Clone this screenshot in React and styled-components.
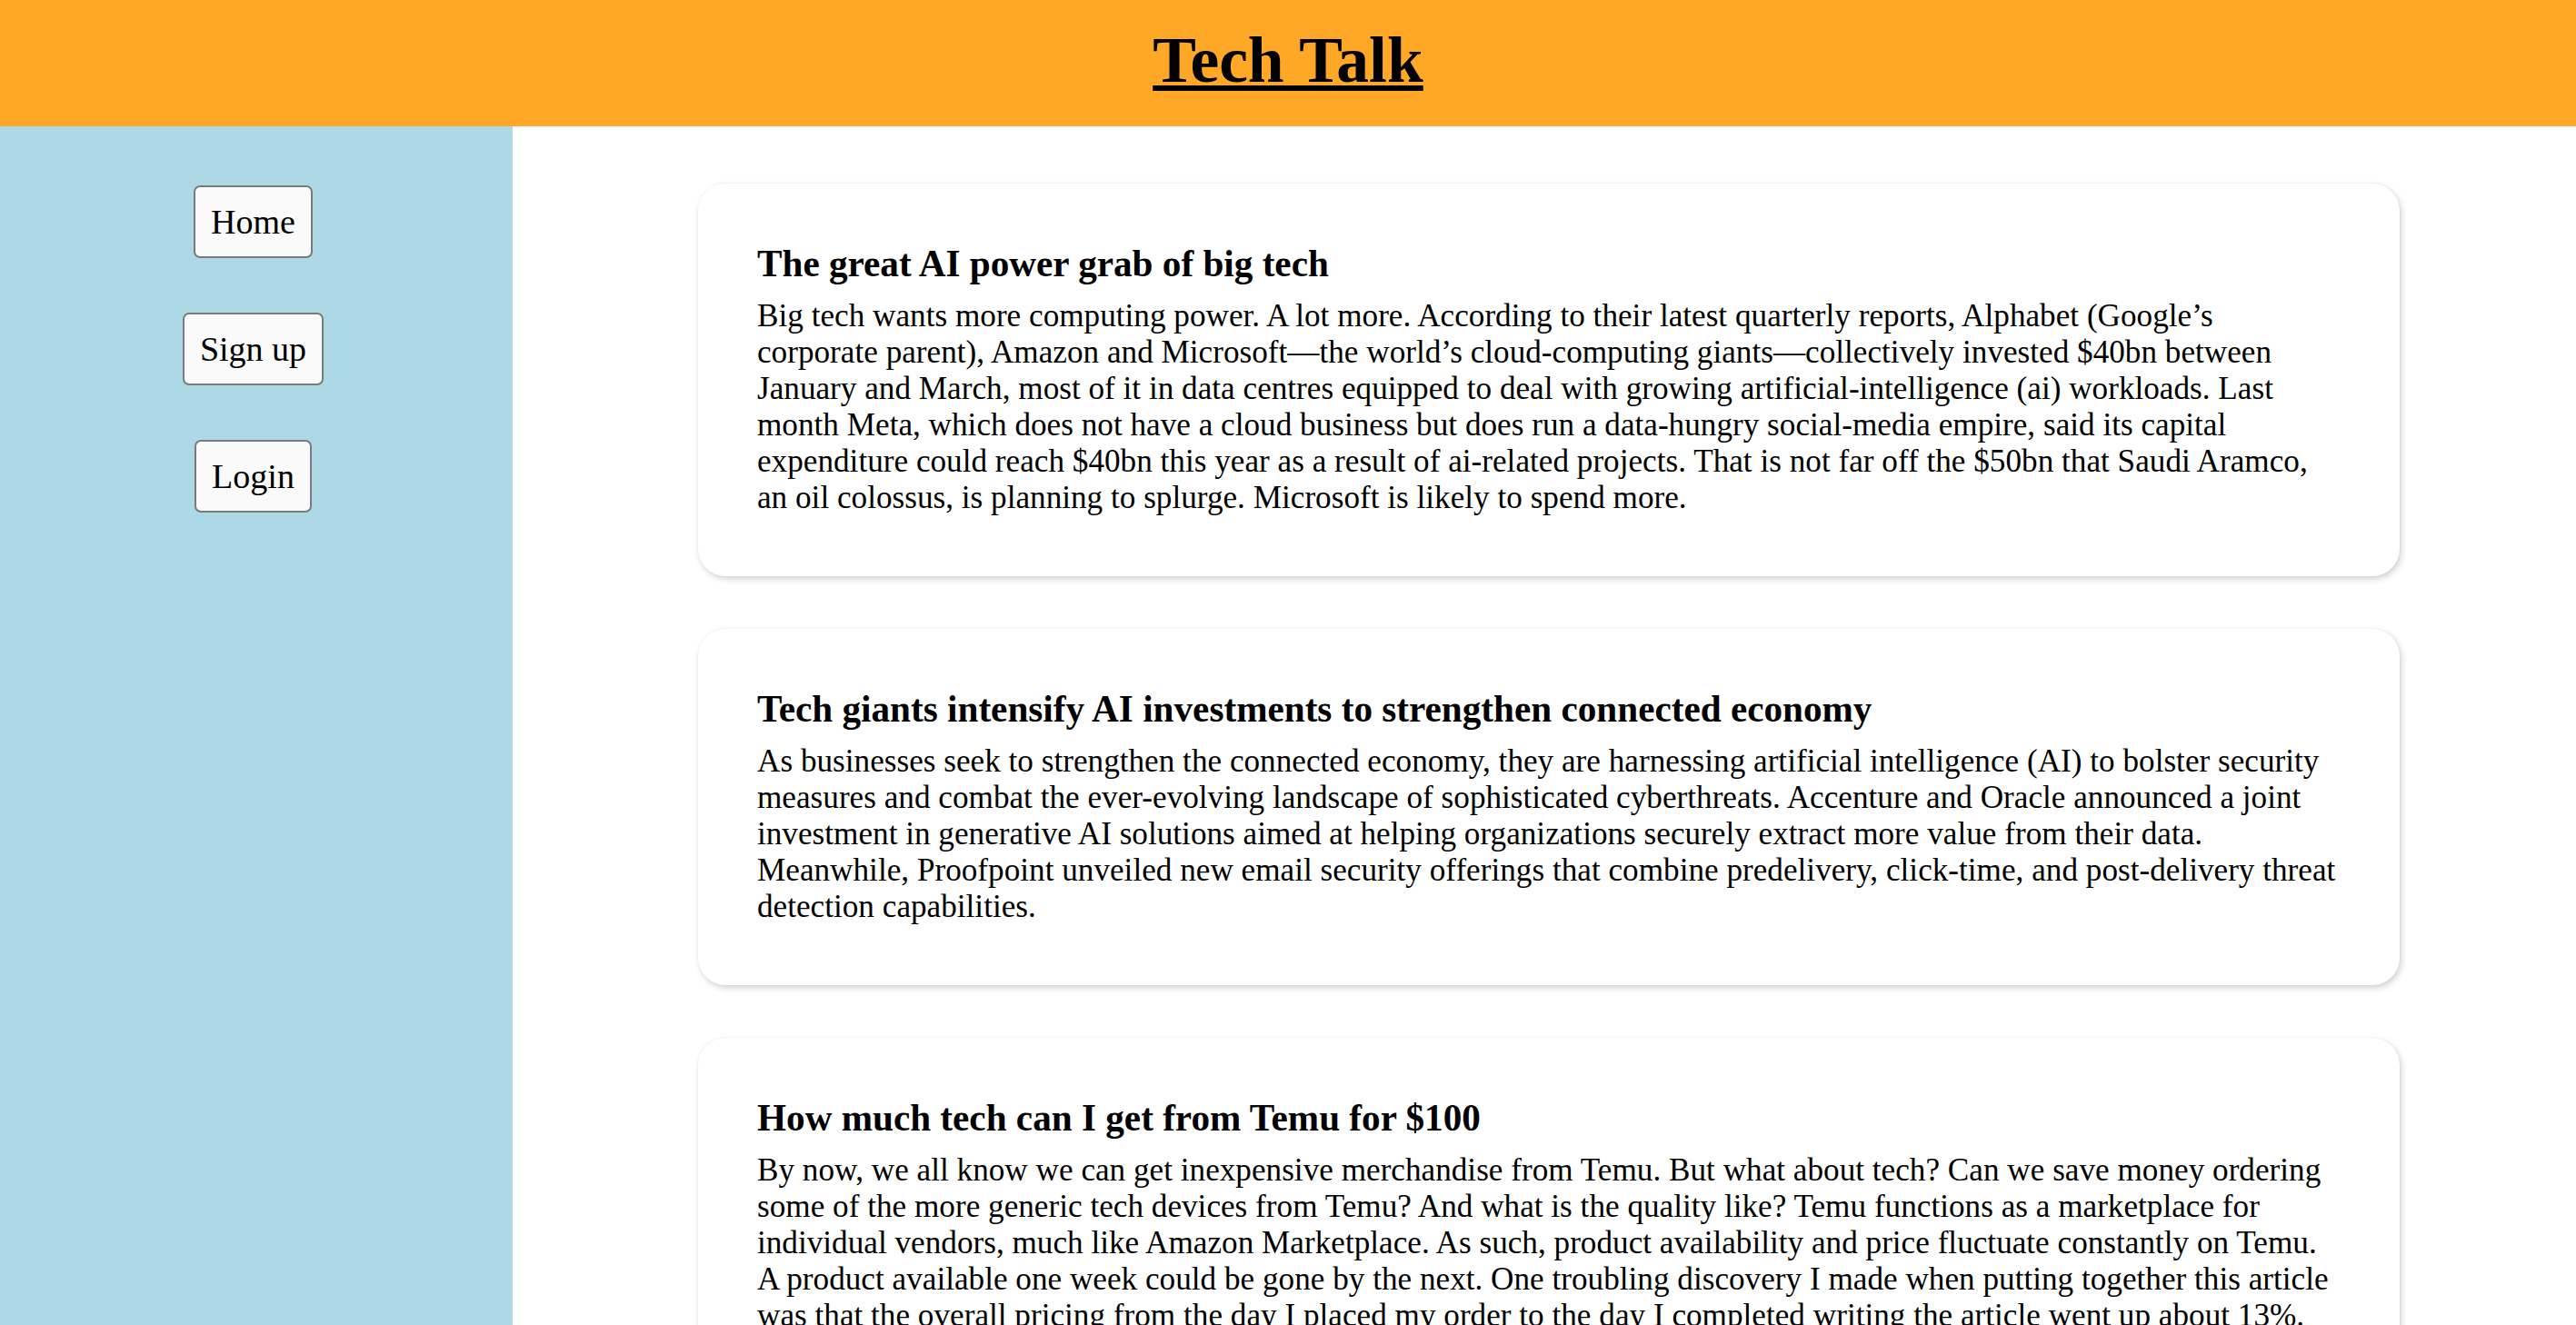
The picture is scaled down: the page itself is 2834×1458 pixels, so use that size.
import React from "react";
import styled, { createGlobalStyle } from "styled-components";

const GlobalStyle = createGlobalStyle`
  body {
    margin: 0;
    font-family: "Liberation Serif", "Times New Roman", serif;
    color: #000;
    background: #fff;
  }
`;

const Page = styled.div`
  display: flex;
  flex-direction: column;
  min-height: 100vh;
`;

const Header = styled.header`
  height: 139px;
  box-sizing: border-box;
  padding-bottom: 8px;
  background-color: #ffa726;
  display: flex;
  align-items: center;
  justify-content: center;
`;

const Title = styled.h1`
  margin: 0;
  font-size: 71.5px;
  font-weight: bold;
  text-decoration: underline;
  text-decoration-thickness: 6px;
  text-underline-offset: 4px;
`;

const Body = styled.div`
  flex: 1;
  display: flex;
`;

const Sidebar = styled.nav`
  width: 564px;
  flex-shrink: 0;
  box-sizing: border-box;
  padding: 65px 7px 0 0;
  background-color: #add8e6;
  display: flex;
  flex-direction: column;
  align-items: center;
  gap: 60px;
`;

const NavButton = styled.button`
  font-family: "Liberation Serif", "Times New Roman", serif;
  font-size: 38px;
  line-height: normal;
  padding: 16px 17px;
  border: 2px solid #7a7a7a;
  border-radius: 7px;
  background-color: #fafafa;
  color: #000;
  cursor: pointer;
`;

const Main = styled.main`
  flex: 1;
  padding: 63px 194px 60px 204px;
  display: flex;
  flex-direction: column;
  gap: 58px;
`;

const Card = styled.article`
  background: #fff;
  border-radius: 30px;
  padding: 0 68px 0 65px;
  box-shadow: 2px 3px 7px rgba(0, 0, 0, 0.18), 0 0 2px rgba(0, 0, 0, 0.06);
`;

const CardTitle = styled.h3`
  margin: 64px 0 14px;
  font-size: 41.2px;
  font-weight: bold;
`;

const CardText = styled.p`
  margin: 0 0 66px;
  font-size: 35.2px;
`;

const posts = [
  {
    title: "The great AI power grab of big tech",
    text:
      "Big tech wants more computing power. A lot more. According to their latest quarterly reports, Alphabet (Google’s corporate parent), Amazon and Microsoft—the world’s cloud-computing giants—collectively invested $40bn between January and March, most of it in data centres equipped to deal with growing artificial-intelligence (ai) workloads. Last month Meta, which does not have a cloud business but does run a data-hungry social-media empire, said its capital expenditure could reach $40bn this year as a result of ai-related projects. That is not far off the $50bn that Saudi Aramco, an oil colossus, is planning to splurge. Microsoft is likely to spend more.",
  },
  {
    title: "Tech giants intensify AI investments to strengthen connected economy",
    text:
      "As businesses seek to strengthen the connected economy, they are harnessing artificial intelligence (AI) to bolster security measures and combat the ever-evolving landscape of sophisticated cyberthreats. Accenture and Oracle announced a joint investment in generative AI solutions aimed at helping organizations securely extract more value from their data. Meanwhile, Proofpoint unveiled new email security offerings that combine predelivery, click-time, and post-delivery threat detection capabilities.",
  },
  {
    title: "How much tech can I get from Temu for $100",
    text:
      "By now, we all know we can get inexpensive merchandise from Temu. But what about tech? Can we save money ordering some of the more generic tech devices from Temu? And what is the quality like? Temu functions as a marketplace for individual vendors, much like Amazon Marketplace. As such, product availability and price fluctuate constantly on Temu. A product available one week could be gone by the next. One troubling discovery I made when putting together this article was that the overall pricing from the day I placed my order to the day I completed writing the article went up about 13%.",
  },
];

export default function App() {
  return (
    <>
      <GlobalStyle />
      <Page>
        <Header>
          <Title>Tech Talk</Title>
        </Header>
        <Body>
          <Sidebar>
            <NavButton>Home</NavButton>
            <NavButton>Sign up</NavButton>
            <NavButton>Login</NavButton>
          </Sidebar>
          <Main>
            {posts.map((post) => (
              <Card key={post.title}>
                <CardTitle>{post.title}</CardTitle>
                <CardText>{post.text}</CardText>
              </Card>
            ))}
          </Main>
        </Body>
      </Page>
    </>
  );
}
